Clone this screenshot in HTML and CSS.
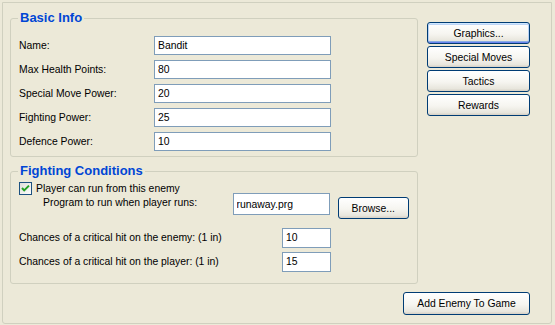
FILE: index.html
```html
<!DOCTYPE html>
<html lang="en">
<head>
    <meta charset="UTF-8">
    <title>Enemy Editor</title>
    <link rel="stylesheet" href="styles.css">
</head>
<body>
    <div class="frame">
        <div class="main">
            <div class="groups">
                <fieldset class="group basic">
                    <legend>Basic Info</legend>
                    <div class="field"><label>Name:</label><input class="text wide" type="text" value="Bandit"></div>
                    <div class="field"><label>Max Health Points:</label><input class="text wide" type="text" value="80"></div>
                    <div class="field"><label>Special Move Power:</label><input class="text wide" type="text" value="20"></div>
                    <div class="field"><label>Fighting Power:</label><input class="text wide" type="text" value="25"></div>
                    <div class="field"><label>Defence Power:</label><input class="text wide" type="text" value="10"></div>
                </fieldset>

                <fieldset class="group fight">
                    <legend>Fighting Conditions</legend>
                    <div class="check-row">
                        <svg class="checkbox" width="13" height="13" viewBox="0 0 13 13">
                            <defs>
                                <linearGradient id="cbfill" x1="0" y1="0" x2="1" y2="1">
                                    <stop offset="0" stop-color="#dcdcd7"/>
                                    <stop offset="1" stop-color="#ffffff"/>
                                </linearGradient>
                            </defs>
                            <rect x="0.5" y="0.5" width="12" height="12" fill="url(#cbfill)" stroke="#1c5180"/>
                            <path d="M3 6 L5.2 8.4 L10 3.6" fill="none" stroke="#21a121" stroke-width="2"/>
                        </svg>
                        <span>Player can run from this enemy</span>
                    </div>
                    <div class="prog-row">
                        <span class="prog-label">Program to run when player runs:</span>
                        <input class="text prog" type="text" value="runaway.prg">
                        <button class="btn browse">Browse...</button>
                    </div>
                    <div class="field crit"><label>Chances of a critical hit on the enemy: (1 in)</label><input class="text small" type="text" value="10"></div>
                    <div class="field crit"><label>Chances of a critical hit on the player: (1 in)</label><input class="text small" type="text" value="15"></div>
                </fieldset>
            </div>

            <div class="side">
                <button class="btn side-btn default">Graphics...</button>
                <button class="btn side-btn">Special Moves</button>
                <button class="btn side-btn">Tactics</button>
                <button class="btn side-btn">Rewards</button>
            </div>
        </div>

        <div class="footer">
            <button class="btn add">Add Enemy To Game</button>
        </div>
    </div>
</body>
</html>
```

FILE: styles.css
```css
body {
    margin: 0;
    background-color: #ece9d8;
    font-family: "Liberation Sans", Arial, sans-serif;
    font-size: 10.4px;
    color: #000000;
}
.frame {
    margin: 2px;
    width: 550px;
    height: 322px;
    box-sizing: border-box;
    border: 1px solid #d0d0bf;
    border-radius: 0 0 3px 3px;
    padding: 8px 21px 0 7px;
}
.main {
    display: flex;
    gap: 9px;
}
.groups {
    width: 408px;
    display: flex;
    flex-direction: column;
    gap: 7px;
}
.group {
    margin: 0;
    min-width: 0;
    border: 1px solid #d0d0bf;
    border-radius: 3px;
    padding: 11px 8px 5px 8px;
}
.group legend {
    margin-left: -1px;
    padding: 0 2px;
    font-size: 13px;
    line-height: 14px;
    font-weight: bold;
    color: #0046d5;
}
.field {
    display: flex;
    align-items: center;
    height: 19px;
    margin-bottom: 5px;
}
.field:last-child {
    margin-bottom: 0;
}
.field label {
    width: 135px;
    flex: none;
}
.text {
    box-sizing: border-box;
    height: 19px;
    border: 1px solid #7f9db9;
    background: #ffffff;
    padding: 0 3px;
    font-family: inherit;
    font-size: 10.4px;
    color: #000000;
    outline: none;
}
.wide {
    width: 177px;
}
.fight {
    padding-top: 4px;
    padding-bottom: 12px;
}
.check-row {
    display: flex;
    align-items: center;
    gap: 4px;
    height: 13px;
}
.checkbox {
    display: block;
}
.prog-row {
    display: flex;
    align-items: flex-start;
    margin-top: -2px;
    padding-left: 24px;
    height: 26px;
}
.prog-label {
    width: 191px;
    margin-top: 4px;
}
.prog {
    width: 97px;
    height: 22px;
}
.browse {
    width: 72px;
    height: 22px;
    margin-left: 8px;
    margin-top: 4px;
}
.crit {
    margin-top: 0;
}
.prog-row + .crit {
    margin-top: 9px;
}
.crit label {
    width: 263px;
}
.small {
    width: 49px;
    height: 20px;
}
.btn {
    box-sizing: border-box;
    border: 1px solid #003c74;
    border-radius: 3px;
    background: linear-gradient(to bottom, #ffffff 0%, #f6f5f0 55%, #e8e6dd 88%, #d6d0c5 100%);
    font-family: inherit;
    font-size: 10.4px;
    color: #000000;
    padding: 0;
    cursor: pointer;
}
.side {
    margin-top: 11px;
    display: flex;
    flex-direction: column;
    gap: 2px;
}
.side-btn {
    width: 103px;
    height: 22px;
}
.default {
    box-shadow: inset 0 1px 0 #cee7ff, inset 0 -1px 0 #6982ee, inset 1px 0 0 #b8d2f5, inset -1px 0 0 #b8d2f5, inset 0 2px 0 #bcd4f6, inset 0 -2px 0 #89ade4;
}
.footer {
    display: flex;
    justify-content: flex-end;
    margin-top: 8px;
}
.add {
    width: 127px;
    height: 23px;
}
```
